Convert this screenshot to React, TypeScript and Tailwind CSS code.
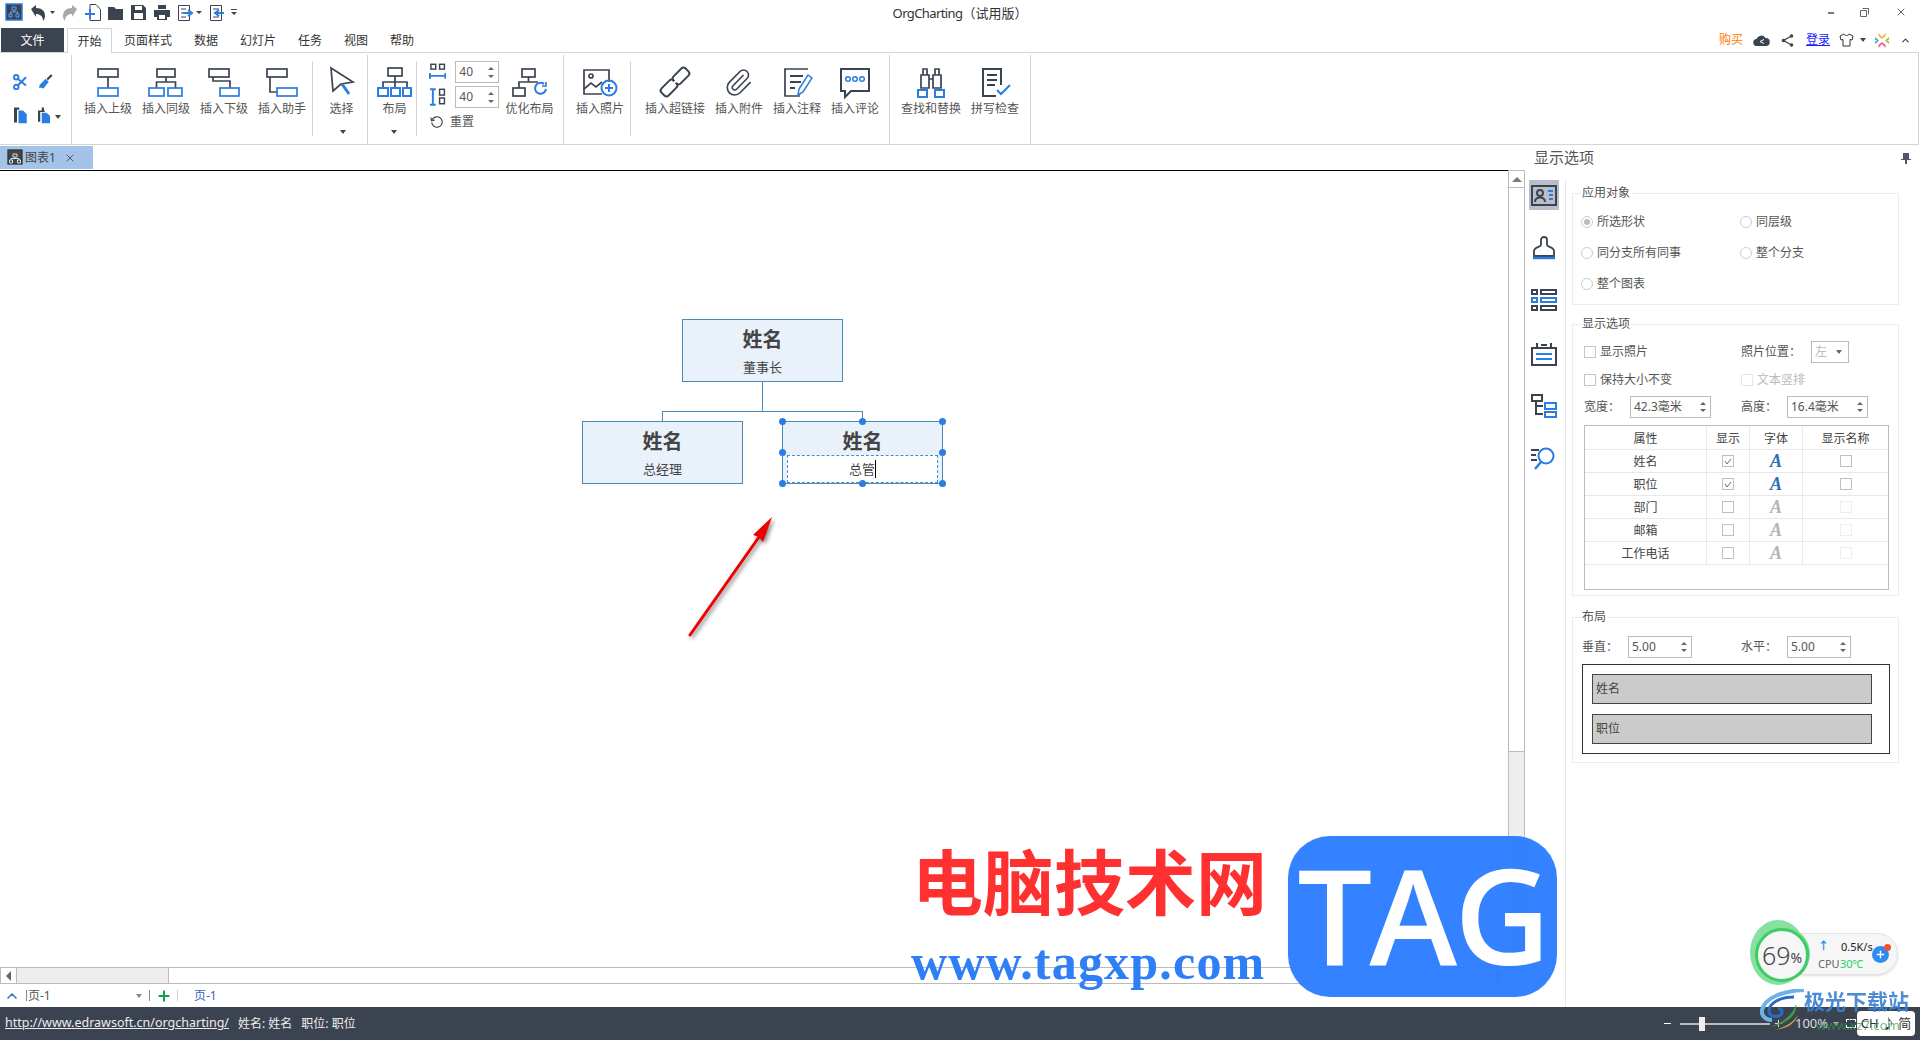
import { ChevronUp, Plus, RotateCw, X } from "lucide-react";
import type { ReactNode } from "react";

const DARK = "#3c4350";
const BLUE = "#2a7de1";

function Caret({ className = "" }: { className?: string }) {
  return <span className={`inline-block w-0 h-0 border-x-[3px] border-x-transparent border-t-[4px] border-t-[#444] ${className}`} />;
}

// quick access toolbar glyphs
function Qat() {
  return (
    <svg width="240" height="28" viewBox="0 0 240 28" className="shrink-0">
      <rect x="6" y="4" width="16" height="16" fill="#3c4350" stroke="#2a7de1" strokeWidth="1.5" />
      <path d="M12 7h4v3h-4zM9 14h3v3H9zM16 14h3v3h-3zM14 10v2M10.5 14v-2h7v2" fill="none" stroke="#5aa2f0" strokeWidth="1" />
      <path d="M31 9l5-4v3c6 0 9 3 9 8 0 2-1 4-2 5 0-5-3-7-7-7v3z" fill="#3c4350" />
      <path d="M50 11h5l-2.500 3z" fill="#444" />
      <path d="M77 9l-5-4v3c-6 0-9 3-9 8 0 2 1 4 2 5 0-5 3-7 7-7v3z" fill="#a8a8a8" />
      <path d="M90 4.500h6l4.500 5v11H90z" fill="#fff" stroke="#3c4350" />
      <path d="M85 14h10M90 9v10" stroke="#2a7de1" strokeWidth="2" />
      <path d="M108 7h6l2 2h7v11h-15z" fill="#3c4350" />
      <path d="M131 5h12l3 3v12h-15z" fill="#3c4350" />
      <rect x="135" y="6" width="7" height="4" fill="#fff" />
      <rect x="134" y="13" width="9" height="6" fill="#fff" />
      <path d="M158 5h8v4h-8zM154 10h16v7h-3v3h-10v-3h-3z" fill="#3c4350" />
      <rect x="159" y="15" width="6" height="4" fill="#fff" />
      <path d="M178.500 5.500h11v15h-11zM181 9h5M181 13h3M181 17h5" fill="#fff" stroke="#3c4350" />
      <path d="M183 13h8M188 10l4 3-4 3" fill="none" stroke="#2a7de1" strokeWidth="2" />
      <path d="M196 11h6l-3 3z" fill="#444" />
      <path d="M210.500 5.500h11v15h-11zM213 9h6M217 13h3M213 17h6" fill="#fff" stroke="#3c4350" />
      <path d="M224 13h-8M219 10l-4 3 4 3" fill="none" stroke="#2a7de1" strokeWidth="2" />
      <path d="M231 9h6v1h-6zM231 12h6l-3 3z" fill="#444" />
    </svg>
  );
}

function TitleBar() {
  return (
    <div className="h-[28px] grid grid-cols-[1fr_auto_1fr] items-center shrink-0">
      <Qat />
      <div className="text-[13px] leading-[16px] text-[#333] -mt-[2px]"><span className="tracking-[-0.6px]">OrgCharting</span>（试用版）</div>
      <div className="flex justify-end items-center pr-[13px] gap-[26px] -mt-[4px]">
        <span className="w-[6px] h-[2px] bg-[#777] mt-[2px]" />
        <svg width="9" height="9" viewBox="0 0 9 9"><path d="M2.500.5h6v6M.5 2.500h6v6h-6z" fill="none" stroke="#666" /></svg>
        <X size={12} className="text-[#666]" />
      </div>
    </div>
  );
}

function TabRow() {
  const tabs = ["页面样式", "数据", "幻灯片", "任务", "视图", "帮助"];
  return (
    <div className="h-[25px] flex items-end shrink-0 relative z-10 -mb-[1px]">
      <div className="ml-[1px] w-[63px] h-[24px] mb-[1px] pt-[1px] bg-[#3c4350] text-white text-[12px] flex items-center justify-center leading-none">文件</div>
      <div className="ml-[3px] w-[45px] h-[25px] pt-[1px] bg-white border-x border-t border-[#d4d4d4] text-[12px] text-[#333] flex items-center justify-center leading-none">开始</div>
      <div className="ml-[12px] flex gap-[22px] h-[24px] mb-[1px] pt-[1px] items-center text-[12px] text-[#333] leading-none">
        {tabs.map((t) => <span key={t}>{t}</span>)}
      </div>
      <div className="ml-auto h-[24px] mb-[1px] flex items-center text-[12px] leading-none pr-[9px]">
        <span className="text-[#ff7a00]">购买</span>
        <svg className="ml-[10px]" width="17" height="11" viewBox="0 0 17 11"><path d="M4 11a3.500 3.500 0 0 1-.5-7A5 5 0 0 1 12.500 3 4 4 0 0 1 13 11z" fill="#3c4350" /><path d="M7 6.500l4-2M7 6.500l4 2" stroke="#fff" /></svg>
        <svg className="ml-[11px]" width="13" height="13" viewBox="0 0 13 13"><path d="M10.500 2L2.500 6.500l8 4.500" fill="none" stroke="#444" strokeWidth="1.300" /><circle cx="10.500" cy="2" r="1.800" fill="#444" /><circle cx="2.500" cy="6.500" r="1.800" fill="#444" /><circle cx="10.500" cy="11" r="1.800" fill="#444" /></svg>
        <span className="ml-[12px] text-[#1a1aff] underline">登录</span>
        <svg className="ml-[9px]" width="15" height="14" viewBox="0 0 15 14"><path d="M5 1L1 3l1 4 2-.5V13h7V6.500L13 7l1-4-4-2c-.5 2-4.500 2-5 0z" fill="none" stroke="#333" /></svg>
        <Caret className="ml-[6px]" />
        <svg className="ml-[9px]" width="14" height="15" viewBox="0 0 14 15">
          <path d="M3.500 0L7 4l3.500-4v3L7 6 3.500 3z" fill="#f5b335" />
          <path d="M0 4l4 3.500L0 11V8.500L2 7.500 0 6.500z" fill="#3aa8e0" />
          <path d="M14 4l-4 3.500 4 3.500V8.500L12 7.500l2-1z" fill="#9ac23c" />
          <path d="M3.500 15L7 11l3.500 4v-3L7 9l-3.500 3z" fill="#ef5a8a" />
        </svg>
        <ChevronUp size={11} strokeWidth={2.500} className="ml-[11px] text-[#444]" />
      </div>
    </div>
  );
}

function RibbonBtn({ label, w, icon, pad = "" }: { label: string; w: string; icon: ReactNode; pad?: string }) {
  return (
    <div className={`${w} ${pad} pt-[12px] flex flex-col items-center shrink-0`}>
      <svg width="40" height="30" viewBox="0 0 40 30" className="shrink-0 overflow-visible" fill="none" stroke={DARK} strokeWidth="1.700">{icon}</svg>
      <span className="mt-[5px] text-[12px] leading-[14px] text-[#555] whitespace-nowrap">{label}</span>
    </div>
  );
}

const boxBlue = { stroke: BLUE };

function Spin({ value, w, gap = "gap-[4px]" }: { value: string; w: string; gap?: string }) {
  return (
    <div className={`${w} h-[22px] border border-[#bbb] flex items-center justify-between pl-[3px] pr-[4px] bg-white`}>
      <span className="text-[12px] leading-none text-[#555]">{value}</span>
      <span className={`flex flex-col ${gap} items-center`}>
        <span className="w-0 h-0 border-x-[3px] border-x-transparent border-b-[3px] border-b-[#666]" />
        <span className="w-0 h-0 border-x-[3px] border-x-transparent border-t-[3px] border-t-[#666]" />
      </span>
    </div>
  );
}

function Ribbon() {
  return (
    <div className="h-[93px] border-y border-r border-[#d4d4d4] mr-[1px] flex shrink-0 pt-[2px]">
      {/* clipboard */}
      <div className="w-[72px] border-r border-[#d4d4d4] shrink-0 grid grid-cols-[25px_1fr] content-start gap-y-[16px] pl-[11px] pt-[17px]">
        <svg width="18" height="18" viewBox="0 0 24 24" fill="none" stroke={BLUE} strokeWidth="2.600"><circle cx="7" cy="7" r="3" /><circle cx="7" cy="20" r="3" /><path d="M9 9l11 9M9 18L20 7" /></svg>
        <svg width="18" height="18" viewBox="0 0 24 24"><path d="M14 9l6-6 2 2-6 6z" fill={DARK} /><path d="M5 17l8-8 4 4-7 9-3-1-3 0z" fill={BLUE} /></svg>
        <svg width="18" height="18" viewBox="0 0 24 24"><path d="M4 2h7v3H8v17H4z" fill={DARK} /><path d="M10 6h6l5 5v12H10z" fill={BLUE} /></svg>
        <div className="flex items-center">
          <svg width="16" height="18" viewBox="0 0 18 24"><path d="M1 6h5V2h3v4h1v2H4v13H1z" fill={DARK} /><path d="M6 9h6l5 4v10H6z" fill={BLUE} /></svg>
          <Caret className="ml-[3px] mt-[3px]" />
        </div>
      </div>
      {/* insert shapes */}
      <div className="w-[296px] border-r border-[#d4d4d4] shrink-0 flex pl-[7px] relative">
        <RibbonBtn label="插入上级" w="w-[58px]" icon={<><rect x="10" y="2" width="20" height="8" /><path d="M20 10v11" /><rect x="10" y="21" width="20" height="8" {...boxBlue} /></>} />
        <RibbonBtn label="插入同级" w="w-[58px]" icon={<><rect x="11" y="2" width="18" height="8" /><path d="M20 10v5M10.500 21v-6h19v6" /><rect x="3" y="21" width="15" height="8" {...boxBlue} /><rect x="22" y="21" width="14" height="8" {...boxBlue} /></>} />
        <RibbonBtn label="插入下级" w="w-[58px]" icon={<><rect x="5" y="2" width="20" height="8" /><path d="M9 10v4h17v7" /><rect x="16" y="21" width="19" height="8" {...boxBlue} /></>} />
        <RibbonBtn label="插入助手" w="w-[58px]" icon={<><rect x="5" y="2" width="20" height="8" /><path d="M8 10v15h7" /><rect x="15" y="21" width="20" height="8" {...boxBlue} /></>} />
        <div className="w-px h-[75px] bg-[#d4d4d4] mt-[6px] ml-[1px] shrink-0" />
        <div className="relative">
          <RibbonBtn label="选择" w="w-[53px]" pad="pl-[4px]" icon={<><path d="M9 1l22 14-12 2-8 7z" strokeLinejoin="miter" /><path d="M20 17l7 10" stroke={BLUE} strokeWidth="3" /></>} />
          <Caret className="ml-[27px] mt-[6px] block" />
        </div>
      </div>
      {/* layout */}
      <div className="w-[196px] border-r border-[#d4d4d4] shrink-0 flex">
        <div>
          <RibbonBtn label="布局" w="w-[48px]" pad="pl-[5px]" icon={<><rect x="13" y="1" width="14" height="8" /><path d="M20 9v6M8 21v-6h24v6M20 15v6" /><rect x="3" y="21" width="10" height="8" {...boxBlue} strokeWidth="2" /><rect x="16" y="21" width="9" height="8" {...boxBlue} strokeWidth="2" /><rect x="28" y="21" width="8" height="8" {...boxBlue} strokeWidth="2" /></>} />
          <Caret className="ml-[23px] mt-[6px] block" />
        </div>
        <div className="w-px h-[75px] bg-[#d4d4d4] mt-[6px] shrink-0" />
        <div className="w-[82px] shrink-0 pl-[12px] pt-[6px] flex flex-col">
          <div className="flex items-center gap-[9px]">
            <svg width="18" height="18" viewBox="0 0 18 18" fill="none" stroke={DARK} strokeWidth="1.500"><rect x="2" y="1" width="5" height="5" /><rect x="11" y="1" width="5" height="5" /><path d="M1 10v6M17 10v6M1 13h16" stroke={BLUE} strokeWidth="2" /></svg>
            <Spin value="40" w="w-[45px]" gap="gap-[5px]" />
          </div>
          <div className="flex items-center gap-[9px] mt-[3px]">
            <svg width="18" height="18" viewBox="0 0 18 18" fill="none" stroke={DARK} strokeWidth="1.500"><rect x="11" y="1" width="5" height="6" /><rect x="11" y="10" width="5" height="6" /><path d="M1 1h6M1 17h6M4 1v16" stroke={BLUE} strokeWidth="2" /></svg>
            <Spin value="40" w="w-[45px]" gap="gap-[5px]" />
          </div>
          <div className="flex items-center mt-[7px] text-[12px] text-[#555] leading-[14px] pl-[1px]">
            <RotateCw size={14} className="text-[#444] -scale-x-100 rotate-[-10deg]" />
            <span className="ml-[6px]">重置</span>
          </div>
        </div>
        <RibbonBtn label="优化布局" w="w-[60px]" pad="pl-[1px]" icon={<><rect x="12" y="2" width="13" height="8" /><path d="M18.500 10v5M9 21v-6h19" /><rect x="3" y="21" width="12" height="8" /><path d="M36 22a5.500 5.500 0 1 1-2-5" {...boxBlue} strokeWidth="2" /><path d="M36 15v4h-4" {...boxBlue} /></>} />
      </div>
      {/* photo */}
      <div className="w-[67px] shrink-0 flex">
        <RibbonBtn label="插入照片" w="w-[66px]" pad="pl-[6px]" icon={<><path d="M29 15V3H4v24h18" /><circle cx="11" cy="9" r="2" /><path d="M4 22l7-6 5 4 6-5" /><circle cx="29" cy="21" r="7.500" {...boxBlue} strokeWidth="2" /><path d="M29 17v8M25 21h8" {...boxBlue} strokeWidth="2" /></>} />
        <div className="w-px h-[75px] bg-[#d4d4d4] mt-[6px] shrink-0" />
      </div>
      {/* links and notes */}
      <div className="w-[259px] border-r border-[#d4d4d4] shrink-0 flex">
        <RibbonBtn label="插入超链接" w="w-[88px]" icon={<g transform="rotate(-45 20 15)"><rect x="3" y="10" width="17" height="10" rx="3" strokeWidth="2" /><rect x="20" y="10" width="17" height="10" rx="3" strokeWidth="2" /><path d="M14 15h12" strokeWidth="2" stroke="#fff" /></g>} />
        <RibbonBtn label="插入附件" w="w-[40px]" icon={<g transform="translate(4.500 .5) scale(1.25)"><path strokeWidth="1.300" d="m16 6-8.414 8.586a2 2 0 0 0 2.829 2.829l8.414-8.586a4 4 0 1 0-5.657-5.657l-8.379 8.551a6 6 0 1 0 8.485 8.485l8.379-8.551" /></g>} />
        <RibbonBtn label="插入注释" w="w-[76px]" icon={<><path d="M31 2H8v27h15" /><path d="M13 9h13M13 15h11M13 21h5" strokeWidth="2" /><path d="M31 8l4 3-9 14-5 3 1-6z" {...boxBlue} strokeWidth="1.500" /></>} />
        <RibbonBtn label="插入评论" w="w-[40px]" icon={<><path d="M6 2h28v22H16l-6 6v-6H6z" strokeWidth="2" /><circle cx="13" cy="12" r="2.300" {...boxBlue} strokeWidth="1.500" /><circle cx="20" cy="12" r="2.300" {...boxBlue} strokeWidth="1.500" /><circle cx="27" cy="12" r="2.300" {...boxBlue} strokeWidth="1.500" /></>} />
      </div>
      {/* find */}
      <div className="w-[141px] border-r border-[#d4d4d4] shrink-0 flex pl-[11px]">
        <RibbonBtn label="查找和替换" w="w-[60px]" icon={<><path d="M10 8h8v13h-8zM22 8h8v13h-8zM12 8V2h4v6M24 8V2h4v6M18 12h4" /><rect x="7" y="23" width="9" height="7" {...boxBlue} strokeWidth="2" /><rect x="24" y="23" width="9" height="7" {...boxBlue} strokeWidth="2" /></>} />
        <RibbonBtn label="拼写检查" w="w-[56px]" pad="ml-[6px]" icon={<><path d="M26 18V2H8v27h13" strokeWidth="2" /><path d="M12 8h10M12 13h10M12 18h8" strokeWidth="2" /><path d="M22 23l4 4 9-9" {...boxBlue} strokeWidth="2" /></>} />
      </div>
    </div>
  );
}

function Diagram() {
  // canvas origin is y=171; nodes are free canvas items
  const node = "absolute w-[161px] h-[63px] bg-[#e9f2fb] border border-[#4a8ab5] flex flex-col items-center text-[#444]";
  const handles = [[782, 421], [862, 421], [942, 421], [782, 452], [942, 452], [782, 483], [862, 483], [942, 483]];
  return (
    <div className="relative flex-1">
      <div className={`${node} left-[682px] top-[148px]`}>
        <span className="text-[20px] leading-[24px] font-bold mt-[8px]">姓名</span>
        <span className="text-[13px] leading-[16px] mt-[7px]">董事长</span>
      </div>
      <div className="absolute left-[762px] top-[210px] w-px h-[30px] bg-[#4a8ab5]" />
      <div className="absolute left-[662px] top-[240px] w-[201px] h-[11px] border-x border-t border-[#4a8ab5]" />
      <div className={`${node} left-[582px] top-[250px]`}>
        <span className="text-[20px] leading-[24px] font-bold mt-[8px]">姓名</span>
        <span className="text-[13px] leading-[16px] mt-[7px]">总经理</span>
      </div>
      <div className={`${node} left-[782px] top-[250px]`}>
        <span className="text-[20px] leading-[24px] font-bold mt-[8px]">姓名</span>
        <div className="absolute left-[4px] top-[33px] w-[151px] h-[28px] bg-white border border-dashed border-[#4a8ad5] flex items-center justify-center">
          <span className="text-[13px] leading-[16px]">总管</span>
          <span className="w-px h-[18px] bg-black" />
        </div>
      </div>
      {handles.map(([x, y]) => (
        <span key={`${x}-${y}`} className="absolute w-[7px] h-[7px] rounded-full bg-[#2a7de1]" style={{ left: x - 3, top: y - 171 - 3 }} />
      ))}
      <svg className="absolute left-[680px] top-[340px] drop-shadow-[2px_2px_2px_rgba(0,0,0,0.5)]" width="100" height="135" viewBox="0 0 100 135">
        <path d="M10 124L79 26" stroke="#ee0000" strokeWidth="3" strokeLinecap="round" />
        <path d="M92 6L83 31 79 26 73 24z" fill="#ee0000" />
      </svg>
    </div>
  );
}

function LeftColumn() {
  return (
    <div className="w-[1525px] shrink-0 flex flex-col">
      <div className="w-[1508px] h-[26px] pt-[1px] border-b border-black shrink-0">
        <div className="w-[93px] h-[23px] bg-[#a3c4e8] flex items-center pl-[7px] text-[12px] text-[#444] leading-none">
          <svg width="17" height="17" viewBox="0 0 17 17" fill="none" stroke="#333" strokeWidth="1.300"><rect x="1" y="1" width="14" height="14" fill="#444" /><path d="M6 5h4v3H6zM2.500 11h3v3h-3zM10.500 11h3v3h-3zM8 8v1.500M4 11V9.500h8V11" stroke="#cde" strokeWidth="1" /></svg>
          <span className="ml-[1px]">图表1</span>
          <X size={12} className="ml-[8px] text-[#555]" />
        </div>
      </div>
      <div className="flex-1 flex min-h-0">
        <Diagram />
        <div className="w-[17px] -mt-[1px] border-x border-[#bbb] flex flex-col shrink-0 bg-[#eee]">
          <div className="h-[18px] bg-white border-y border-[#bbb] flex items-center justify-center">
            <span className="w-0 h-0 border-x-[5px] border-x-transparent border-b-[5px] border-b-[#777]" />
          </div>
          <div className="h-[564px] bg-white border-b border-[#bbb]" />
          <div className="flex-1" />
          <div className="h-[16px] border border-[#ddd] flex items-center justify-center">
            <span className="w-0 h-0 border-x-[5px] border-x-transparent border-t-[5px] border-t-[#bbb]" />
          </div>
        </div>
      </div>
      <div className="h-[17px] border-y border-[#bbb] flex shrink-0">
        <div className="w-[17px] bg-white border-x border-[#bbb] flex items-center justify-center">
          <span className="w-0 h-0 border-y-[5px] border-y-transparent border-r-[5px] border-r-[#666]" />
        </div>
        <div className="w-[152px] bg-[#eee] border-r border-[#bbb]" />
        <div className="flex-1" />
        <div className="w-[17px] border-x border-[#bbb] flex items-center justify-center">
          <span className="w-0 h-0 border-y-[5px] border-y-transparent border-l-[5px] border-l-[#666]" />
        </div>
        <div className="w-[17px]" />
      </div>
      <div className="h-[23px] flex items-center text-[12px] leading-none shrink-0">
        <ChevronUp size={16} strokeWidth={2.500} className="ml-[4px] text-[#3d7ab5]" />
        <span className="ml-[6px] w-px h-[11px] bg-[#888]" />
        <span className="ml-[1px] text-[#555] w-[108px]">页-1</span>
        <Caret className="border-t-[#888]" />
        <span className="ml-[7px] w-px h-[11px] bg-[#888]" />
        <Plus size={16} strokeWidth={3} className="ml-[6px] text-[#0fa44a]" />
        <span className="ml-[5px] w-px h-[11px] bg-[#ccc]" />
        <span className="ml-[16px] text-[#3b5fc4]">页-1</span>
      </div>
    </div>
  );
}

function Radio({ label, on = false }: { label: string; on?: boolean }) {
  return (
    <div className="flex items-center text-[12px] text-[#555] leading-none">
      <span className="w-[12px] h-[12px] rounded-full border border-[#ccc] flex items-center justify-center shrink-0">
        {on && <span className="w-[6px] h-[6px] rounded-full bg-[#bbb]" />}
      </span>
      <span className="ml-[4px] whitespace-nowrap">{label}</span>
    </div>
  );
}

function Check({ label, off = false }: { label: string; off?: boolean }) {
  return (
    <div className={`flex items-center text-[12px] leading-none ${off ? "text-[#bbb]" : "text-[#555]"}`}>
      <span className={`w-[12px] h-[12px] border ${off ? "border-[#e6e6e6]" : "border-[#c4c4c4]"} shrink-0`} />
      <span className="ml-[4px] whitespace-nowrap">{label}</span>
    </div>
  );
}

function TableBox({ checked = false, faint = false }: { checked?: boolean; faint?: boolean }) {
  return (
    <span className={`w-[12px] h-[12px] border ${faint ? "border-[#eee]" : "border-[#c0c0c0]"} flex items-center justify-center`}>
      {checked && <svg width="8" height="7" viewBox="0 0 8 7"><path d="M1 3l2 3 4-5" fill="none" stroke="#666" /></svg>}
    </span>
  );
}

const rows = [
  { name: "姓名", on: true },
  { name: "职位", on: true },
  { name: "部门", on: false },
  { name: "邮箱", on: false },
  { name: "工作电话", on: false },
];

function PropTable() {
  const cols = "grid grid-cols-[122px_43px_53px_1fr]";
  const cell = "flex items-center justify-center border-r border-[#e8e8e8] last:border-r-0";
  return (
    <div className="mt-[7px] w-[305px] h-[165px] border border-[#bbb] text-[12px] leading-none text-[#444]">
      <div className={`${cols} h-[24px] border-b border-[#e8e8e8]`}>
        <span className={`${cell} pt-[2px]`}>属性</span>
        <span className={`${cell} pt-[2px]`}>显示</span>
        <span className={`${cell} pt-[2px]`}>字体</span>
        <span className={`${cell} pt-[2px]`}>显示名称</span>
      </div>
      {rows.map((r) => (
        <div key={r.name} className={`${cols} h-[23px] border-b border-[#e8e8e8]`}>
          <span className={`${cell} pt-[2px]`}>{r.name}</span>
          <span className={cell}><TableBox checked={r.on} /></span>
          <span className={`${cell} font-['Liberation_Serif',serif] italic font-bold text-[18px] ${r.on ? "text-[#2e6fb5]" : "text-[#b4b4b4]"}`}>A</span>
          <span className={cell}><TableBox faint={!r.on} /></span>
        </div>
      ))}
    </div>
  );
}

function SideIcons() {
  return (
    <div className="w-[40px] shrink-0 flex flex-col items-center pt-[10px] pr-[2px]">
      <div className="w-[30px] h-[30px] bg-[#b9bfca] flex items-center justify-center">
        <svg width="26" height="21" viewBox="0 0 26 21" fill="none" stroke={DARK} strokeWidth="2"><rect x="1" y="1" width="24" height="19" /><circle cx="9" cy="8" r="3" /><path d="M4 17c0-6 10-6 10 0" /><path d="M17 6h5M18 10h4M18 14h4" stroke={BLUE} /></svg>
      </div>
      <svg className="mt-[25px]" width="24" height="26" viewBox="0 0 24 26" fill="none" stroke={DARK} strokeWidth="1.800"><path d="M9 10V5a3 3 0 0 1 6 0v5c0 2 7 2 7 6v5H2v-5c0-4 7-4 7-6z" /><path d="M1 23h22" stroke={BLUE} strokeWidth="2.500" /></svg>
      <svg className="mt-[28px]" width="26" height="22" viewBox="0 0 26 22" fill="none" stroke={DARK} strokeWidth="2"><rect x="1" y="1" width="5" height="4" /><rect x="1" y="9" width="5" height="4" stroke={BLUE} /><rect x="1" y="17" width="5" height="4" /><rect x="10" y="1" width="15" height="4" /><rect x="10" y="9" width="15" height="4" stroke={BLUE} /><rect x="10" y="17" width="15" height="4" /></svg>
      <svg className="mt-[31px]" width="26" height="24" viewBox="0 0 26 24" fill="none" stroke={DARK} strokeWidth="2"><path d="M1 6h24v17H1zM6 1v4M20 1v4M10 3h6" /><path d="M5 12h16M5 17h16" stroke={BLUE} /></svg>
      <svg className="mt-[28px]" width="26" height="24" viewBox="0 0 26 24" fill="none" stroke={DARK} strokeWidth="2"><rect x="1" y="1" width="10" height="6" /><path d="M5 7v13h7M5 12h7" /><rect x="14" y="9" width="11" height="6" stroke={BLUE} /><rect x="14" y="18" width="11" height="5" stroke={BLUE} /></svg>
      <svg className="mt-[29px]" width="26" height="24" viewBox="0 0 26 24" fill="none" stroke={DARK} strokeWidth="2"><path d="M0 3h8M0 8h5M0 13h6" /><circle cx="15" cy="9" r="7.500" stroke={BLUE} /><path d="M10 15l-6 7" stroke={BLUE} strokeWidth="2.500" /></svg>
    </div>
  );
}

function RightColumn() {
  const field = "text-[12px] leading-none text-[#555] whitespace-nowrap";
  return (
    <div className="flex-1 flex flex-col min-w-0">
      <div className="h-[25px] shrink-0 flex items-center justify-between pl-[9px] pr-[9px]">
        <span className="text-[15px] leading-none text-[#555]">显示选项</span>
        <svg width="10" height="12" viewBox="0 0 10 12"><path d="M2 1h6v6h2v1H6v4H4V8H0V7h2z" fill="#556" /></svg>
      </div>
      <div className="flex-1 flex min-h-0">
        <SideIcons />
        <div className="mt-[10px] flex-1 border-l border-[#e6e6e6] pt-[6px] pl-[6px] pr-[21px]">
          <fieldset className="border border-[#ececec] pb-[5px]">
            <legend className="text-[12px] leading-[14px] text-[#555] ml-[8px] px-[1px]">应用对象</legend>
            <div className="pt-[6px] pl-[8px] grid grid-cols-[159px_1fr] auto-rows-[31px] items-center">
              <Radio label="所选形状" on />
              <Radio label="同层级" />
              <Radio label="同分支所有同事" />
              <Radio label="整个分支" />
              <Radio label="整个图表" />
            </div>
          </fieldset>
          <fieldset className="border border-[#ececec] mt-[12px] pl-[11px] pb-[5px]">
            <legend className="text-[12px] leading-[14px] text-[#555] -ml-[3px] px-[1px]">显示选项</legend>
            <div className="mt-[10px] h-[22px] grid grid-cols-[157px_1fr] items-center">
              <Check label="显示照片" />
              <div className="flex items-center">
                <span className={field}>照片位置：</span>
                <div className="ml-[10px] w-[38px] h-[22px] border border-[#bbb] flex items-center justify-between pl-[3px] pr-[6px] text-[12px] text-[#bbb]">
                  左<Caret className="border-t-[#666]" />
                </div>
              </div>
            </div>
            <div className="mt-[6px] h-[22px] grid grid-cols-[157px_1fr] items-center">
              <Check label="保持大小不变" />
              <Check label="文本竖排" off />
            </div>
            <div className="mt-[5px] h-[22px] grid grid-cols-[157px_1fr] items-center">
              <div className="flex items-center">
                <span className={`${field} w-[46px]`}>宽度：</span>
                <Spin value="42.3毫米" w="w-[81px]" />
              </div>
              <div className="flex items-center">
                <span className={`${field} w-[46px]`}>高度：</span>
                <Spin value="16.4毫米" w="w-[81px]" />
              </div>
            </div>
            <PropTable />
          </fieldset>
          <fieldset className="border border-[#ececec] mt-[14px] pl-[9px] pb-[8px]">
            <legend className="text-[12px] leading-[14px] text-[#555] -ml-[1px] px-[1px]">布局</legend>
            <div className="mt-[11px] h-[23px] grid grid-cols-[159px_1fr] items-center">
              <div className="flex items-center">
                <span className={`${field} w-[46px]`}>垂直：</span>
                <Spin value="5.00" w="w-[64px]" />
              </div>
              <div className="flex items-center">
                <span className={`${field} w-[46px]`}>水平：</span>
                <Spin value="5.00" w="w-[64px]" />
              </div>
            </div>
            <div className="mt-[6px] w-[308px] h-[90px] border border-[#333] px-[9px] py-[9px] flex flex-col gap-[10px]">
              <div className="w-[280px] h-[30px] bg-[#cbcbcb] border border-[#444] flex items-center pl-[3px] text-[12px] leading-none text-[#444]">姓名</div>
              <div className="w-[280px] h-[30px] bg-[#cbcbcb] border border-[#444] flex items-center pl-[3px] text-[12px] leading-none text-[#444]">职位</div>
            </div>
          </fieldset>
        </div>
      </div>
    </div>
  );
}

function StatusBar() {
  return (
    <div className="h-[33px] bg-[#3c4350] flex items-center pl-[5px] text-[12.5px] leading-none text-[#eee] shrink-0">
      <span className="underline">http://www.edrawsoft.cn/orgcharting/ </span>
      <span className="ml-[9px] text-[12px]">姓名: 姓名</span>
      <span className="ml-[9px] text-[12px]">职位: 职位</span>
      <div className="ml-auto flex items-center pr-[5px] text-[#ddd]">
        <span className="w-[7px] h-px bg-white" />
        <div className="ml-[9px] w-[90px] h-[2px] bg-[#bbb] relative">
          <span className="absolute left-[19px] -top-[6px] w-[6px] h-[14px] bg-[#eee]" />
        </div>
        <Plus size={11} className="ml-[3px] text-[#e8e8e8]" />
        <span className="ml-[11px] text-[13px] w-[30px]">100%</span>
        <Caret className="ml-[8px] border-t-[#aaa]" />
        <span className="ml-[7px] w-[10px] h-[9px] border border-dashed border-white" />
        <div className="ml-[1px] w-[58px] h-[25px] bg-white rounded-[4px] text-[#333] text-[13px] flex items-center justify-center gap-[2px] whitespace-nowrap">CH ♪ 简</div>
      </div>
    </div>
  );
}

function Overlays() {
  return (
    <>
      <div className="absolute left-[912px] top-[836px] text-[71px] leading-[84px] font-bold text-[#ff3030] font-['Noto_Sans_CJK_SC',sans-serif] whitespace-nowrap">电脑技术网</div>
      <div className="absolute left-[911px] top-[932px] text-[50px] leading-[60px] text-[#2e7ff5] font-['Liberation_Serif',serif] font-bold whitespace-nowrap tracking-[1.2px]">www.tagxp.com</div>
      <div className="absolute left-[1288px] top-[836px] w-[269px] h-[161px] rounded-[42px] bg-[#2e7eff] opacity-[.97] flex items-center justify-center text-white font-['Open_Sans',sans-serif] font-semibold text-[133px] leading-none tracking-[-3px] pb-[6px]">TAG</div>

      {/* system monitor widget */}
      <div className="absolute left-[1790px] top-[933px] w-[108px] h-[42px] rounded-r-[21px] bg-[#f6f6f6] border border-[#e4e4e4] shadow-sm text-[11px] leading-none">
        <span className="absolute left-[27px] top-[6px] text-[#2a8cf0] font-bold">↑</span>
        <span className="absolute left-[50px] top-[7px] text-[#222]">0.5K/s</span>
        <span className="absolute left-[27px] top-[24px] text-[#666]">CPU</span>
        <span className="absolute left-[49px] top-[24px] text-[#22d46a]">30℃</span>
        <span className="absolute left-[81px] top-[12px] w-[17px] h-[17px] rounded-full bg-[#2e8cf0] flex items-center justify-center text-white"><Plus size={11} strokeWidth={3} /></span>
        <span className="absolute left-[93px] top-[10px] w-[7px] h-[7px] rounded-full bg-[#f0522f]" />
      </div>
      <div className="absolute left-[1750px] top-[920px] w-[56px] h-[65px] rounded-[50%] bg-[#86e0a0]" />
      <div className="absolute left-[1762px] top-[928px] w-[48px] h-[52px] rounded-[50%] bg-[#7adf96]" />
      <div className="absolute left-[1755px] top-[928px] w-[54px] h-[54px] rounded-full bg-[#f6f6f6] border-[3px] border-[#3ecb68] flex items-center justify-center text-[#444]">
        <span className="text-[25px] leading-none font-light">69</span><span className="text-[14px] leading-none mt-[6px]">%</span>
      </div>

      {/* download site watermark */}
      <svg className="absolute left-[1760px] top-[989px]" width="46" height="42" viewBox="0 0 46 42" fill="none">
        <path d="M44 1C24 2 5 8 2 21c-1 6 4 10 10 10" stroke="#6fb2e8" strokeWidth="4" />
        <path d="M34 8C20 8 9 14 9 22c0 5 5 6 9 5 6-2 5-8 0-7" stroke="#2a6cc0" strokeWidth="3" />
        <path d="M10 38C22 34 33 26 36 15c2 10-8 20-26 23z" fill="#3d9a3f" />
        <path d="M14 41c10-2 20-8 24-15-3 9-12 14-24 15z" fill="#c9a83a" />
      </svg>
      <div className="absolute left-[1804px] top-[987px] text-[21px] leading-[28px] font-bold text-[#3a80d0] whitespace-nowrap opacity-90">极光下载站</div>
      <div className="absolute left-[1816px] top-[1017px] text-[13px] leading-[16px] text-[#2e9a4e] whitespace-nowrap opacity-70">www.xz7.com</div>
    </>
  );
}

export default function App() {
  return (
    <div className="relative w-[1920px] h-[1040px] overflow-hidden bg-white flex flex-col font-['Noto_Sans','Noto_Sans_CJK_SC',sans-serif]">
      <TitleBar />
      <TabRow />
      <Ribbon />
      <div className="flex-1 flex min-h-0">
        <LeftColumn />
        <RightColumn />
      </div>
      <StatusBar />
      <Overlays />
    </div>
  );
}
